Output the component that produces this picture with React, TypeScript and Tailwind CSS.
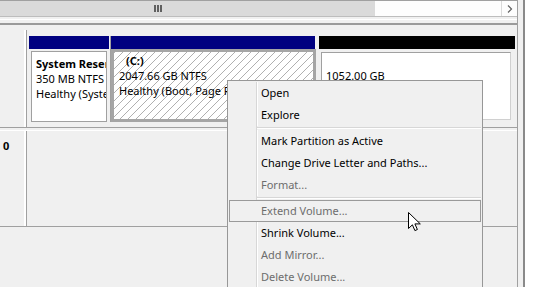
const menuItems = [
  { label: "Open" },
  { label: "Explore" },
  { sep: true },
  { label: "Mark Partition as Active" },
  { label: "Change Drive Letter and Paths..." },
  { label: "Format...", disabled: true },
  { sep: true },
  { label: "Extend Volume...", disabled: true, hot: true },
  { label: "Shrink Volume..." },
  { label: "Add Mirror...", disabled: true },
  { label: "Delete Volume...", disabled: true },
  { sep: true },
  { label: "Properties" },
  { label: "Help" },
];

function ContextMenu() {
  return (
    <div className="absolute left-[227px] top-[80px] w-[256px] border border-[#979797] bg-[#f0f0f0] pt-[1px]">
      {menuItems.map((item, i) => {
        if (item.sep) {
          return (
            <div key={i} className="flex h-[4px]">
              <div className="h-full w-[29px] border-r border-[#d7d7d7]" />
              <div className="flex flex-1 flex-col justify-center pr-[1px]">
                <div className="h-[1px] bg-[#d7d7d7]" />
                <div className="h-[1px] bg-white" />
              </div>
            </div>
          );
        }
        const color = item.disabled ? "text-[#6d6d6d]" : "text-black";
        if (item.hot) {
          return (
            <div
              key={i}
              className={`mx-[1px] flex h-[22px] items-center border border-[#9a9a9a] pl-[31px] ${color}`}
            >
              {item.label}
            </div>
          );
        }
        return (
          <div key={i} className={`flex h-[22px] items-center ${color}`}>
            <div className="h-full w-[29px] border-r border-[#d7d7d7]" />
            <div className="h-full w-[1px] bg-white" />
            <span className="pl-[3px] whitespace-nowrap">{item.label}</span>
          </div>
        );
      })}
    </div>
  );
}

function Cursor() {
  return (
    <svg width="14" height="21" viewBox="0 0 14 21" className="absolute left-[408px] top-[212px]">
      <path
        d="M0.5 0.5V16.5L4.4 12.8L6.9 18.6L9.4 17.5L6.9 11.9H12.3Z"
        fill="#fff"
        stroke="#000"
        strokeLinejoin="miter"
      />
    </svg>
  );
}

function LabelCell({ text }: { text?: string }) {
  return (
    <div className="flex h-full">
      <div className="w-[24px] overflow-hidden pl-[3px] pt-[7px] text-[11px] font-bold leading-[15px]">{text}</div>
      <div className="w-[2px] bg-white" />
      <div className="w-[1px] bg-[#a0a0a0]" />
    </div>
  );
}

export default function App() {
  return (
    <div className="relative h-[287px] w-[538px] overflow-hidden bg-[#f0f0f0] font-['Noto_Sans',sans-serif] text-[11px] text-black">
      <div className="flex h-full">
        <div className="flex w-[517px] flex-col">
          {/* horizontal scrollbar */}
          <div className="flex h-[17px] border-y border-t-[#a0a0a0] border-b-[#bdbdbd]">
            <div className="flex w-[375px] items-center bg-[#dadada] pl-[154px]">
              <div className="flex gap-[1px]">
                <div className="h-[7px] w-[2px] bg-[#606060]" />
                <div className="h-[7px] w-[2px] bg-[#606060]" />
                <div className="h-[7px] w-[2px] bg-[#606060]" />
              </div>
            </div>
            <div className="flex-1 bg-[#fdfdfd]" />
            <div className="flex w-[16px] items-center justify-center border-l border-[#dadada] bg-[#fdfdfd]">
              <svg width="6" height="8" viewBox="0 0 6 8">
                <path d="M1 0.5L4.5 4L1 7.5" fill="none" stroke="#606060" strokeWidth="1.2" />
              </svg>
            </div>
          </div>

          {/* splitter */}
          <div className="flex h-[13px] flex-col">
            <div className="h-[2px]" />
            <div className="h-[1px] bg-white" />
            <div className="h-[3px]" />
            <div className="flex h-[2px]">
              <div className="flex-1 bg-[#9a9a9a]" />
            </div>
          </div>

          {/* disk row 1 */}
          <div className="flex h-[98px] border-b border-[#a0a0a0]">
            <LabelCell />
            <div className="flex flex-1 pb-[5px] pl-[1px] pt-[6px]">
              {/* System Reserved */}
              <div className="flex w-[82px] flex-col">
                <div className="mx-[1px] h-[13px] bg-[#000080]" />
                <div className="flex flex-1 pl-[3px] pr-[3px] pt-[2px]">
                  <div className="flex-1 overflow-hidden border border-[#a0a0a0] bg-white pl-[4px] pt-[4px] leading-[15px] whitespace-nowrap">
                    <div className="font-bold">System Reserved</div>
                    <div>350 MB NTFS</div>
                    <div>Healthy (System, Active, Primary Partition)</div>
                  </div>
                </div>
              </div>
              <div className="w-[1px] bg-[#a0a0a0]" />
              {/* C: */}
              <div className="flex w-[206px] flex-col">
                <div className="mr-[2px] h-[13px] bg-[#000080]" />
                <div className="mr-[1px] flex-1 overflow-hidden border-[3px] border-[#a5a5a5] bg-[repeating-linear-gradient(135deg,#b0b0b0_0px,#b0b0b0_1px,#ffffff_1px,#ffffff_5.66px)] pl-[5px] pt-[1px] leading-[15px] whitespace-nowrap">
                  <div className="pl-[7px] font-bold">(C:)</div>
                  <div>2047.66 GB NTFS</div>
                  <div>Healthy (Boot, Page File, Crash Dump, Primary Partition)</div>
                </div>
              </div>
              {/* Unallocated */}
              <div className="flex w-[200px] flex-col">
                <div className="mx-[2px] h-[13px] bg-black" />
                <div className="flex flex-1 pb-[2px] pl-[4px] pr-[6px] pt-[3px]">
                  <div className="flex-1 overflow-hidden border border-[#a0a0a0] border-r-[#d0d0d0] border-b-[#d0d0d0] bg-white pl-[4px] pt-[15px] leading-[15px] whitespace-nowrap">
                    <div>1052.00 GB</div>
                    <div>Unallocated</div>
                  </div>
                </div>
              </div>
            </div>
          </div>

          <div className="h-[2px]" />

          {/* disk row 0 */}
          <div className="flex h-[97px] border-y border-t-white border-b-[#a0a0a0]">
            <LabelCell text="0" />
            <div className="flex-1" />
          </div>

          <div className="flex-1" />
        </div>

        <div className="w-[1px] bg-[#a0a0a0]" />
        <div className="w-[5px] bg-[#f0f0f0]" />
        <div className="w-[2px] bg-[#8a8a8a]" />
        <div className="flex-1 bg-white" />
      </div>

      <ContextMenu />
      <Cursor />
    </div>
  );
}
